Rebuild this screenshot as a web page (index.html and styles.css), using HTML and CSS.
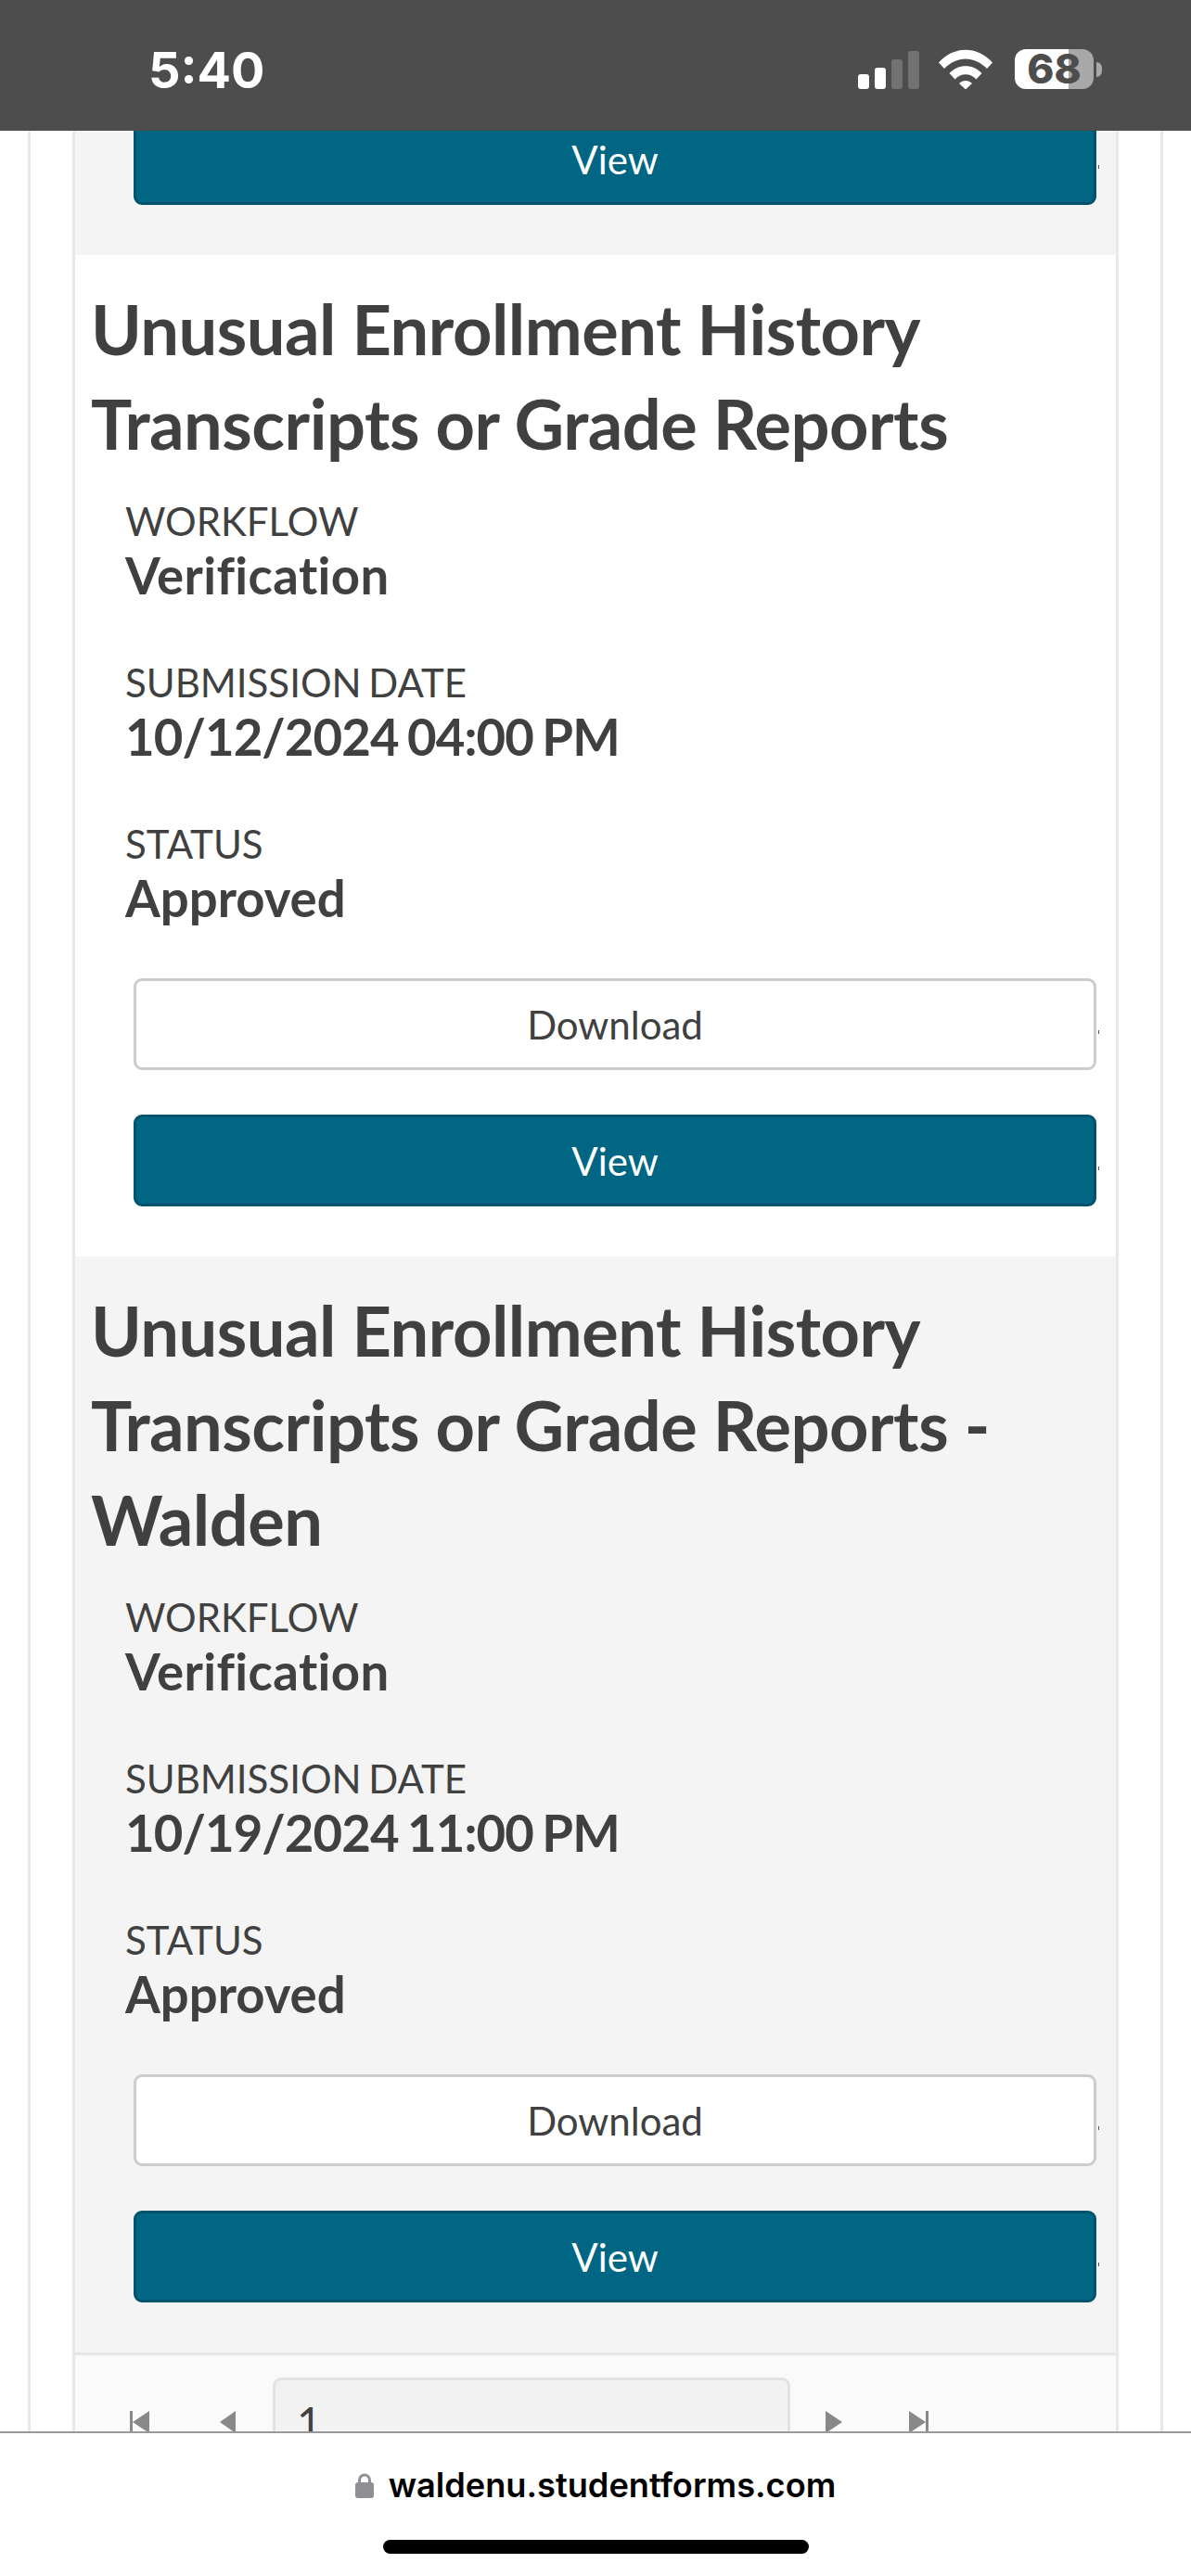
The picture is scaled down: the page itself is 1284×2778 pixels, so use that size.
FILE: index.html
```html
<!DOCTYPE html>
<html lang="en">
<head>
  <meta charset="UTF-8" />
  <meta name="viewport" content="width=device-width, initial-scale=1.0" />
  <title>Student Forms</title>
  <link rel="stylesheet" href="styles.css">
</head>
<body>
  <div class="status-bar">
    <span class="time">5:40</span>
    <div class="status-icons">
      <div class="signal">
        <i class="bar b1"></i>
        <i class="bar b2"></i>
        <i class="bar b3 off"></i>
        <i class="bar b4 off"></i>
      </div>
      <svg class="wifi" viewBox="0 0 58 43" width="58" height="43">
        <path fill="#fff" d="M0 14.500 C16 -4 42 -4 58 14.500 L52 21 C38 7 20 7 6 21 Z" />
        <path fill="#fff" d="M11.500 26 C21 15.500 37 15.500 46.500 26 L40.500 32.500 C34 25.500 24 25.500 17.500 32.500 Z" />
        <path fill="#fff" d="M22 37 C26 33 32 33 36 37 L29 43.500 Z" />
      </svg>
      <div class="battery">
        <div class="battery-body"><span>68</span></div>
        <i class="battery-cap"></i>
      </div>
    </div>
  </div>

  <div class="page">
    <div class="panel">
      <section class="record record-alt record-cut">
        <div class="btn-row">
          <button class="btn btn-primary">View</button><i class="tick"></i>
        </div>
      </section>

      <section class="record">
        <h2>Unusual Enrollment History Transcripts or Grade Reports</h2>
        <dl class="fields">
          <dt>WORKFLOW</dt>
          <dd class="workflow">Verificat&zwnj;ion</dd>
          <dt>SUBMISSION DATE</dt>
          <dd class="date">10/12/2024 04:00 PM</dd>
          <dt>STATUS</dt>
          <dd>Approved</dd>
        </dl>
        <div class="btn-row">
          <button class="btn">Download</button><i class="tick"></i>
        </div>
        <div class="btn-row">
          <button class="btn btn-primary">View</button><i class="tick"></i>
        </div>
      </section>

      <section class="record record-alt">
        <h2>Unusual Enrollment History Transcripts or Grade Reports - Walden</h2>
        <dl class="fields">
          <dt>WORKFLOW</dt>
          <dd class="workflow">Verificat&zwnj;ion</dd>
          <dt>SUBMISSION DATE</dt>
          <dd class="date">10/19/2024 11:00 PM</dd>
          <dt>STATUS</dt>
          <dd>Approved</dd>
        </dl>
        <div class="btn-row">
          <button class="btn">Download</button><i class="tick"></i>
        </div>
        <div class="btn-row">
          <button class="btn btn-primary">View</button><i class="tick"></i>
        </div>
      </section>

      <div class="pager">
        <svg class="pager-icon first" viewBox="0 0 21 24" width="21" height="24">
          <rect x="0" y="0" width="3" height="24" fill="#888" />
          <path d="M21 0 L21 24 L3 12 Z" fill="#888" />
        </svg>
        <svg class="pager-icon prev" viewBox="0 0 17 24" width="17" height="24">
          <path d="M17 0 L17 24 L0 12 Z" fill="#888" />
        </svg>
        <div class="page-input">1</div>
        <svg class="pager-icon next" viewBox="0 0 18 24" width="18" height="24">
          <path d="M0 0 L0 24 L18 12 Z" fill="#888" />
        </svg>
        <svg class="pager-icon last" viewBox="0 0 21 24" width="21" height="24">
          <path d="M0 0 L0 24 L18 12 Z" fill="#888" />
          <rect x="18" y="0" width="3" height="24" fill="#888" />
        </svg>
      </div>
    </div>
  </div>

  <div class="url-bar">
    <div class="url">
      <svg class="lock" viewBox="0 0 20 27" width="20" height="27">
        <path fill="none" stroke="#8e8e93" stroke-width="3" d="M4.500 13 V8 C4.500 0 15.500 0 15.500 8 V13" />
        <rect x="0" y="10" width="20" height="17" rx="3" fill="#8e8e93" />
      </svg>
      <span>waldenu.studentforms.com</span>
    </div>
    <div class="home-bar"></div>
  </div>
</body>
</html>
```

FILE: styles.css
```css
* { box-sizing: border-box; }
html, body { height: 100%; }
body {
  margin: 0;
  height: 2778px;
  overflow: hidden;
  position: relative;
  background: #fff;
  color: #404040;
  font-family: 'Lato', sans-serif;
}

/* phone chrome, sits over the scrolled page */
.status-bar {
  position: absolute;
  top: 0;
  left: 0;
  right: 0;
  height: 141px;
  background: #4d4d4d;
  z-index: 2;
}
.time {
  position: absolute;
  left: 160px;
  top: 46px;
  color: #fff;
  font-family: 'Inter', sans-serif;
  font-weight: 700;
  font-size: 54px;
  line-height: 60px;
}
.status-icons {
  position: absolute;
  left: 925px;
  top: 53px;
  display: flex;
  align-items: flex-end;
  height: 43px;
}
.signal {
  display: flex;
  align-items: flex-end;
  gap: 6px;
  margin-right: 21px;
}
.bar {
  display: block;
  width: 12px;
  background: #fff;
  border-radius: 3px;
}
.bar.off { background: #727272; }
.b1 { height: 16px; }
.b2 { height: 23px; }
.b3 { height: 32px; }
.b4 { height: 41px; }
.wifi { display: block; margin-right: 24px; }
.battery {
  display: flex;
  align-items: center;
}
.battery-body {
  width: 85px;
  height: 43px;
  border-radius: 12px;
  background: linear-gradient(to right, #fff 68%, #a8a8a8 68%);
  color: #4d4d4d;
  font-family: 'Inter', sans-serif;
  font-weight: 800;
  font-size: 44px;
  line-height: 43px;
  text-align: center;
}
.battery-cap {
  display: block;
  width: 6px;
  height: 16px;
  margin-left: 3px;
  background: #a8a8a8;
  border-radius: 0 8px 8px 0;
}

.page {
  margin: 0 30px;
  padding: 0 45px;
  height: 2778px;
  border-left: 3px solid #e8e8e8;
  border-right: 3px solid #e8e8e8;
}
.panel {
  height: 2778px;
  border-left: 3px solid #e8e8e8;
  border-right: 3px solid #e8e8e8;
}

.record { padding: 29px 17px 6px; }
.record-alt { background: #f4f4f4; }
.record-cut { padding-top: 122px; }

h2 {
  margin: 0;
  font-size: 74px;
  font-weight: 700;
  line-height: 102px;
  letter-spacing: -0.5px;
}

.fields {
  margin: 0 0 -3px 37px;
  padding-top: 28px;
}
dt {
  font-size: 42px;
  line-height: 52px;
  word-spacing: -3px;
}
dd {
  margin: 0 0 58px;
  font-size: 54.500px;
  font-weight: 700;
  line-height: 64px;
}
dd.workflow { letter-spacing: 0.4px; }
dd.date {
  letter-spacing: -0.9px;
  word-spacing: -3px;
}

.btn-row {
  display: flex;
  align-items: center;
  margin: 0 0 48px 46px;
}
.btn {
  display: block;
  flex-shrink: 0;
  width: 1038px;
  height: 99px;
  padding: 0;
  background: #fff;
  border: 3px solid #ccc;
  border-radius: 9px;
  color: #404040;
  font-family: 'Lato', sans-serif;
  font-size: 42px;
}
.btn-primary {
  background: #006684;
  border-color: #00536d;
  color: #fff;
}
.tick {
  display: block;
  width: 1px;
  height: 4px;
  margin: 16px 0 0 2px;
  background: #555;
}

.pager {
  display: flex;
  align-items: flex-start;
  height: 200px;
  padding-top: 24px;
  background: #fafafa;
  border-top: 3px solid #e6e6e6;
}
.pager-icon { display: block; margin-top: 36px; }
.first { margin-left: 59px; }
.prev { margin-left: 76px; }
.page-input {
  width: 558px;
  height: 120px;
  margin-left: 40px;
  padding: 19px 23px 0;
  background: #f2f2f2;
  border: 3px solid #e2e2e2;
  border-radius: 9px;
  font-size: 46px;
  line-height: 52px;
}
.next { margin-left: 38px; }
.last { margin-left: 72px; }

.url-bar {
  position: absolute;
  left: 0;
  right: 0;
  bottom: 0;
  height: 156px;
  background: #fff;
  border-top: 2px solid #999;
  z-index: 2;
}
.url {
  display: flex;
  justify-content: center;
  align-items: center;
  gap: 16px;
  margin-top: 38px;
  height: 36px;
  font-family: 'Inter', sans-serif;
  font-weight: 600;
  font-size: 36.200px;
  color: #000;
}
.lock { display: block; }
.home-bar {
  width: 459px;
  height: 15px;
  margin: 41px auto 0;
  background: #000;
  border-radius: 8px;
}
```
